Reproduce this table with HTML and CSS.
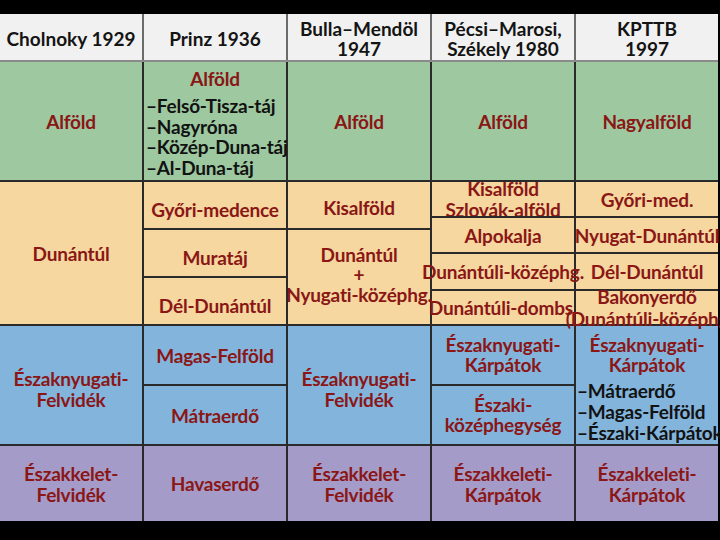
FILE: index.html
```html
<!DOCTYPE html>
<html lang="hu">
<head>
<meta charset="utf-8">
<title>Tájbeosztások</title>
<link rel="stylesheet" href="styles.css">
</head>
<body>
<div class="table">
  <div class="head">
    <div class="hcell">Cholnoky 1929</div>
    <div class="hcell">Prinz 1936</div>
    <div class="hcell">Bulla–Mendöl<br>1947</div>
    <div class="hcell">Pécsi–Marosi,<br>Székely 1980</div>
    <div class="hcell">KPTTB<br>1997</div>
  </div>
  <div class="body">
    <!-- Alföld -->
    <div class="cell green c1 rg">Alföld</div>
    <div class="cell green c2 rg prinz over">
      <div class="title">Alföld</div>
      <div class="list">
        <div>–Felső-Tisza-táj</div>
        <div>–Nagyróna</div>
        <div>–Közép-Duna-táj</div>
        <div>–Al-Duna-táj</div>
      </div>
    </div>
    <div class="cell green c3 rg">Alföld</div>
    <div class="cell green c4 rg">Alföld</div>
    <div class="cell green c5 rg">Nagyalföld</div>

    <!-- Dunántúl -->
    <div class="cell tan c1 t-all">Dunántúl</div>
    <div class="cell tan c2 t-a low">Győri-medence</div>
    <div class="cell tan c2 t-b low">Muratáj</div>
    <div class="cell tan c2 t-c low">Dél-Dunántúl</div>
    <div class="cell tan c3 t-a lowish">Kisalföld</div>
    <div class="cell tan c3 t-bc over">Dunántúl<br>+<br>Nyugati-középhg.</div>
    <div class="cell tan c4 t-1 clip">Kisalföld<br>Szlovák-alföld</div>
    <div class="cell tan c4 t-2">Alpokalja</div>
    <div class="cell tan c4 t-3 over">Dunántúli-középhg.</div>
    <div class="cell tan c4 t-4 over">Dunántúli-dombs.</div>
    <div class="cell tan c5 t-1">Győri-med.</div>
    <div class="cell tan c5 t-2 over">Nyugat-Dunántúl</div>
    <div class="cell tan c5 t-3">Dél-Dunántúl</div>
    <div class="cell tan c5 t-4 front">Bakonyerdő<br>(Dunántúli-középhg</div>

    <!-- Északnyugat -->
    <div class="cell blue c1 b-all low">Északnyugati-<br>Felvidék</div>
    <div class="cell blue c2 b-1">Magas-Felföld</div>
    <div class="cell blue c2 b-2">Mátraerdő</div>
    <div class="cell blue c3 b-all low">Északnyugati-<br>Felvidék</div>
    <div class="cell blue c4 b-1 two">Északnyugati-<br>Kárpátok</div>
    <div class="cell blue c4 b-2 two">Északi-<br>középhegység</div>
    <div class="cell blue c5 b-all kpttb over">
      <div class="title">Északnyugati-<br>Kárpátok</div>
      <div class="list">
        <div>–Mátraerdő</div>
        <div>–Magas-Felföld</div>
        <div>–Északi-Kárpátok</div>
      </div>
    </div>

    <!-- Északkelet -->
    <div class="cell purple c1 rp">Északkelet-<br>Felvidék</div>
    <div class="cell purple c2 rp">Havaserdő</div>
    <div class="cell purple c3 rp">Északkelet-<br>Felvidék</div>
    <div class="cell purple c4 rp">Északkeleti-<br>Kárpátok</div>
    <div class="cell purple c5 rp">Északkeleti-<br>Kárpátok</div>
  </div>
</div>
</body>
</html>
```

FILE: styles.css
```css
html, body {
  margin: 0;
  padding: 0;
  background: #000;
  overflow: hidden;
}

body {
  padding-top: 14px;
  font-family: "Lato", "Liberation Sans", sans-serif;
  font-weight: 700;
}

.table {
  width: 718px;
}

.head {
  display: grid;
  grid-template-columns: repeat(5, 1fr);
  column-gap: 2px;
  background: #6b6b6b;
  height: 46px;
}

.hcell {
  background: #f1f1f1;
  color: #141414;
  font-size: 19px;
  line-height: 20px;
  text-align: center;
  display: flex;
  align-items: center;
  justify-content: center;
  padding-top: 3px;
  box-sizing: border-box;
}

.body {
  display: grid;
  grid-template-columns: repeat(5, 1fr);
  grid-template-rows: 118px 34px 10px 22px 22px 11px 33px 58px 58px 75px;
  gap: 2px;
  background: #2a2a2a;
  border-top: 2px solid #8a8a8a;
}

.cell {
  color: #8a1616;
  font-size: 19px;
  line-height: 21px;
  letter-spacing: -0.2px;
  text-align: center;
  display: flex;
  align-items: center;
  justify-content: center;
  white-space: nowrap;
  min-width: 0;
}

.green { background: #9dc8a0; }
.tan { background: #f5d79f; }
.blue { background: #82b4dc; }
.purple { background: #a59bc8; }

.c1 { grid-column: 1; }
.c2 { grid-column: 2; }
.c3 { grid-column: 3; }
.c4 { grid-column: 4; }
.c5 { grid-column: 5; }

.rg { grid-row: 1; }
.t-all { grid-row: 2 / 8; }
.t-a { grid-row: 2 / 4; }
.t-b { grid-row: 4 / 6; }
.t-c { grid-row: 6 / 8; }
.t-bc { grid-row: 4 / 8; line-height: 20px; padding-bottom: 4px; box-sizing: border-box; }
.t-1 { grid-row: 2; }
.t-2 { grid-row: 3 / 5; }
.t-3 { grid-row: 5 / 7; }
.t-4 { grid-row: 7; }
.b-all { grid-row: 8 / 10; }
.b-1 { grid-row: 8; }
.b-2 { grid-row: 9; }
.rp { grid-row: 10; }

.low { padding-top: 8px; box-sizing: border-box; }
.lowish { padding-top: 4px; box-sizing: border-box; }

.two { line-height: 20px; }

.clip { overflow: hidden; }

.over { z-index: 2; }

.front { line-height: 22px; z-index: 3; }

.prinz,
.kpttb {
  flex-direction: column;
  align-items: stretch;
  justify-content: flex-start;
}

.prinz { padding-top: 6px; }
.prinz .title { line-height: 22px; }
.prinz .list {
  margin-top: 6px;
  padding-left: 2px;
  color: #121212;
  text-align: left;
  line-height: 20.5px;
}

.kpttb { padding-top: 9px; }
.kpttb .title { line-height: 20px; }
.kpttb .list {
  margin-top: 5px;
  padding-left: 1px;
  color: #121212;
  text-align: left;
  line-height: 21px;
}
```
